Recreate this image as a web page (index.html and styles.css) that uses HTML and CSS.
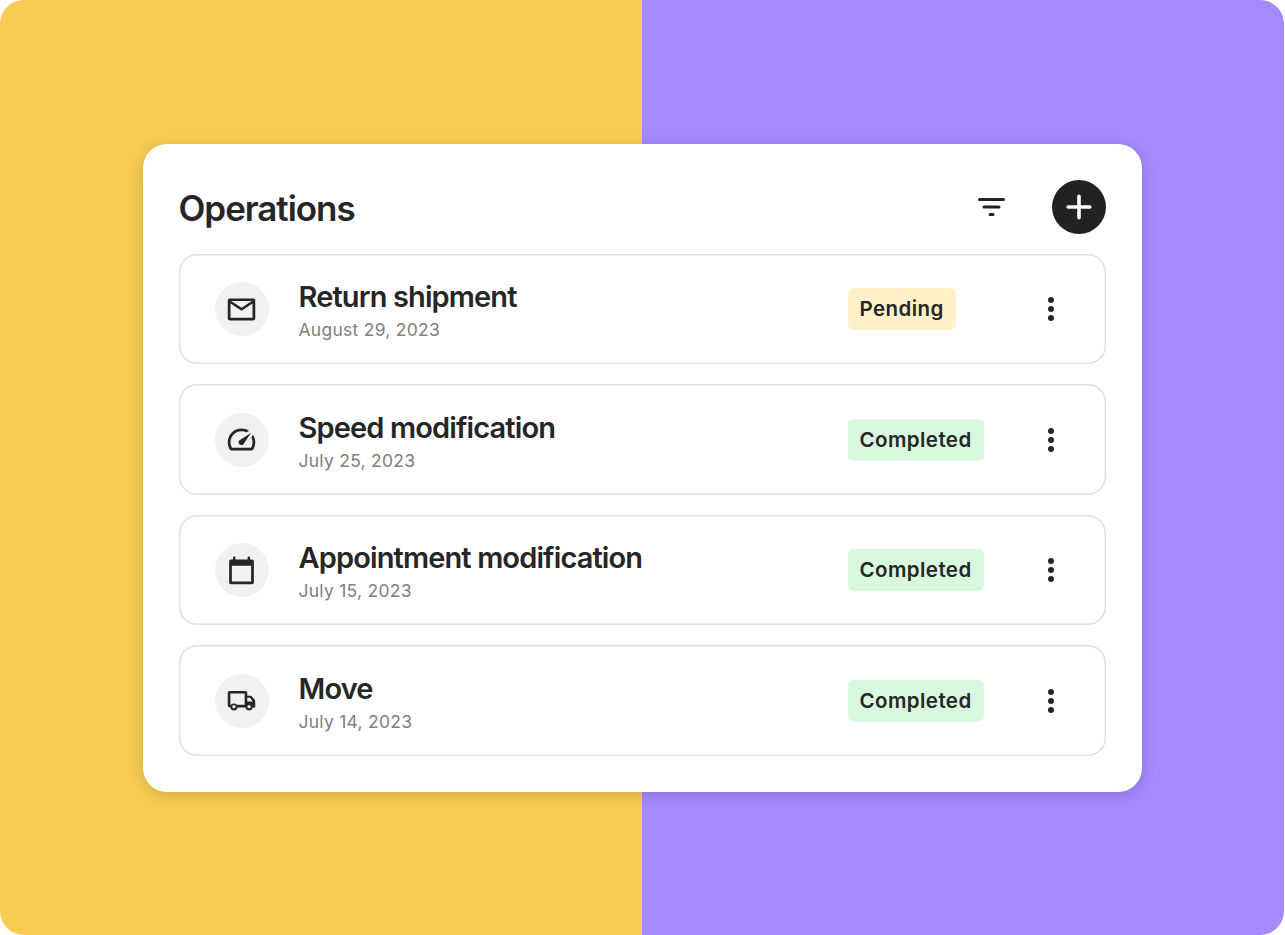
FILE: index.html
```
<!DOCTYPE html>
<html lang="en">
    <head>
        <title>Operations</title>
        <meta charset="UTF-8">
        <link rel="stylesheet" href="styles.css">
    </head>
    <body>
        <main class="stage">
            <section class="card">
                <header class="card-header">
                    <h1>Operations</h1>
                    <svg class="filter" viewBox="0 0 27 18"><path d="M1.5 1.5h24M6 9h15M12 16.5h3"/></svg>
                    <button class="add" aria-label="Add">
                        <svg viewBox="0 0 54 54"><path d="M27 16.2v21.6M16.2 27h21.6"/></svg>
                    </button>
                </header>

                <ul class="operations">
                    <li class="operation">
                        <span class="icon">
                            <svg viewBox="0 0 24 24"><path d="M3.5 20Q2 20 2 18.5v-13Q2 4 3.5 4h17Q22 4 22 5.5v13q0 1.5-1.5 1.500zM12 12.900 4 7.700V18h16V7.700zm0-2.200L19.500 5.900h-15z"/></svg>
                        </span>
                        <div class="text">
                            <h2>Return shipment</h2>
                            <p>August 29, 2023</p>
                        </div>
                        <div class="status"><span class="badge pending">Pending</span></div>
                        <svg class="more" viewBox="0 0 6 24"><circle cx="3" cy="3" r="3"/><circle cx="3" cy="12" r="3"/><circle cx="3" cy="21" r="3"/></svg>
                    </li>
                    <li class="operation">
                        <span class="icon">
                            <svg viewBox="0 0 24 24"><path d="M10.45 15.5q.6.6 1.55.57t1.4-.67L19 7l-8.4 5.6q-.65.45-.7 1.37t.55 1.53zM12 4q1.48 0 2.84.41t2.56 1.24l-1.9 1.2q-.82-.42-1.7-.64T12 6Q8.68 6 6.34 8.34T4 14q0 1.05.29 2.08T5.1 18h13.8q.57-.95.84-1.98T20 13.9q0-.9-.22-1.75T19.15 10.5l1.2-1.9q.75 1.18 1.19 2.5t.46 2.75-.32 2.73-1.03 2.48q-.28.45-.75.7t-1 .24H5.1q-.53 0-1-.25t-.75-.69q-.65-1.13-1-2.39T2 14q0-2.08.79-3.89t2.15-3.18 3.19-2.15T12 4z"/></svg>
                        </span>
                        <div class="text">
                            <h2>Speed modification</h2>
                            <p>July 25, 2023</p>
                        </div>
                        <div class="status"><span class="badge completed">Completed</span></div>
                        <svg class="more" viewBox="0 0 6 24"><circle cx="3" cy="3" r="3"/><circle cx="3" cy="12" r="3"/><circle cx="3" cy="21" r="3"/></svg>
                    </li>
                    <li class="operation">
                        <span class="icon">
                            <svg viewBox="0 0 24 24"><path d="M4.300 22Q3 22 3 20.700V5.300Q3 4 4.300 4h1.500V2.800q0-.9.9-.9t.9.9V4h8.800V2.800q0-.9.9-.9t.9.9V4h1.500Q21 4 21 5.300v15.400q0 1.300-1.300 1.300zM5 20h14V8.600H5z"/></svg>
                        </span>
                        <div class="text">
                            <h2>Appointment modification</h2>
                            <p>July 15, 2023</p>
                        </div>
                        <div class="status"><span class="badge completed">Completed</span></div>
                        <svg class="more" viewBox="0 0 6 24"><circle cx="3" cy="3" r="3"/><circle cx="3" cy="12" r="3"/><circle cx="3" cy="21" r="3"/></svg>
                    </li>
                    <li class="operation">
                        <span class="icon">
                            <svg viewBox="0 0 24 24"><path fill-rule="evenodd" d="M6.5 19.2a2.7 2.7 0 0 1-2.65-2.2H3.5Q2 17 2 15.5v-9Q2 5 3.5 5h11.3q1.4 0 1.4 1.4V8.5h2.2q.9 0 1.4.7l1.9 2.5q.3.4.3.9V17h-1.85a2.7 2.7 0 0 1-5.3 0h-5.7a2.7 2.7 0 0 1-2.65 2.2zM3.9 15.1h.5a2.7 2.7 0 0 1 4.2 0h5.7V6.9H3.9zM16.2 10v2.7h4L18.2 10zM6.5 17.7a1.2 1.2 0 1 0 0-2.4 1.2 1.2 0 0 0 0 2.4zm11 0a1.2 1.2 0 1 0 0-2.4 1.2 1.2 0 0 0 0 2.4z"/></svg>
                        </span>
                        <div class="text">
                            <h2>Move</h2>
                            <p>July 14, 2023</p>
                        </div>
                        <div class="status"><span class="badge completed">Completed</span></div>
                        <svg class="more" viewBox="0 0 6 24"><circle cx="3" cy="3" r="3"/><circle cx="3" cy="12" r="3"/><circle cx="3" cy="21" r="3"/></svg>
                    </li>
                </ul>
            </section>
        </main>
    </body>
</html>
```
FILE: styles.css
```
* { box-sizing: border-box; }
body { margin: 0; background: #fff; color: #262626; font-family: Inter, "Liberation Sans", sans-serif; }
h1, h2, p, ul { margin: 0; padding: 0; }
svg { display: block; }

.stage { display: flex; justify-content: center; align-items: flex-start; width: 1284px; height: 934.5px; padding-top: 144px; border-radius: 24px; background: linear-gradient(90deg, #f8cc52 50%, #a689ff 50%); }
.card { width: 999px; height: 648px; padding: 36px; border-radius: 24px; background: #fff; box-shadow: 0 3px 15px rgba(0, 0, 0, 0.16); }

.card-header { display: flex; align-items: center; height: 54px; margin-bottom: 19.5px; }
.card-header h1 { flex: 1; font-size: 35px; line-height: 54px; font-weight: 600; letter-spacing: -1.05px; padding-top: 2px; }
.filter { width: 27px; height: 18px; margin-right: 46.5px; fill: none; stroke: #222; stroke-width: 3; stroke-linecap: round; }
.add { width: 54px; height: 54px; padding: 0; border: 0; border-radius: 50%; background: #222; }
.add svg { width: 54px; height: 54px; fill: none; stroke: #fff; stroke-width: 3.6; stroke-linecap: round; }

.operations { list-style: none; display: grid; gap: 20px; }
.operation { display: flex; align-items: center; height: 110.5px; padding: 0.5px 51.5px 0 36px; border-radius: 18px; box-shadow: inset 0 0 0 1.5px #e0e0e0; }
.icon { display: flex; align-items: center; justify-content: center; width: 54px; height: 54px; margin-right: 30px; border-radius: 50%; background: #f1f1f1; }
.icon svg { width: 33px; height: 33px; fill: #262626; }
.text { flex: 1; padding-top: 3.5px; }
.text h2 { font-size: 29px; line-height: 36px; font-weight: 600; letter-spacing: -0.87px; }
.text p { margin-top: 3px; color: #808080; font-size: 17.5px; line-height: 24px; letter-spacing: 0.26px; }
.status { width: 200.5px; }
.badge { display: block; width: fit-content; height: 42px; padding: 0 12px; border-radius: 6px; font-size: 20.5px; line-height: 42px; font-weight: 600; letter-spacing: 0.43px; }
.pending { background: #fff1c7; }
.completed { background: #d9f9df; }
.more { width: 6px; height: 24px; fill: #262626; }
```
